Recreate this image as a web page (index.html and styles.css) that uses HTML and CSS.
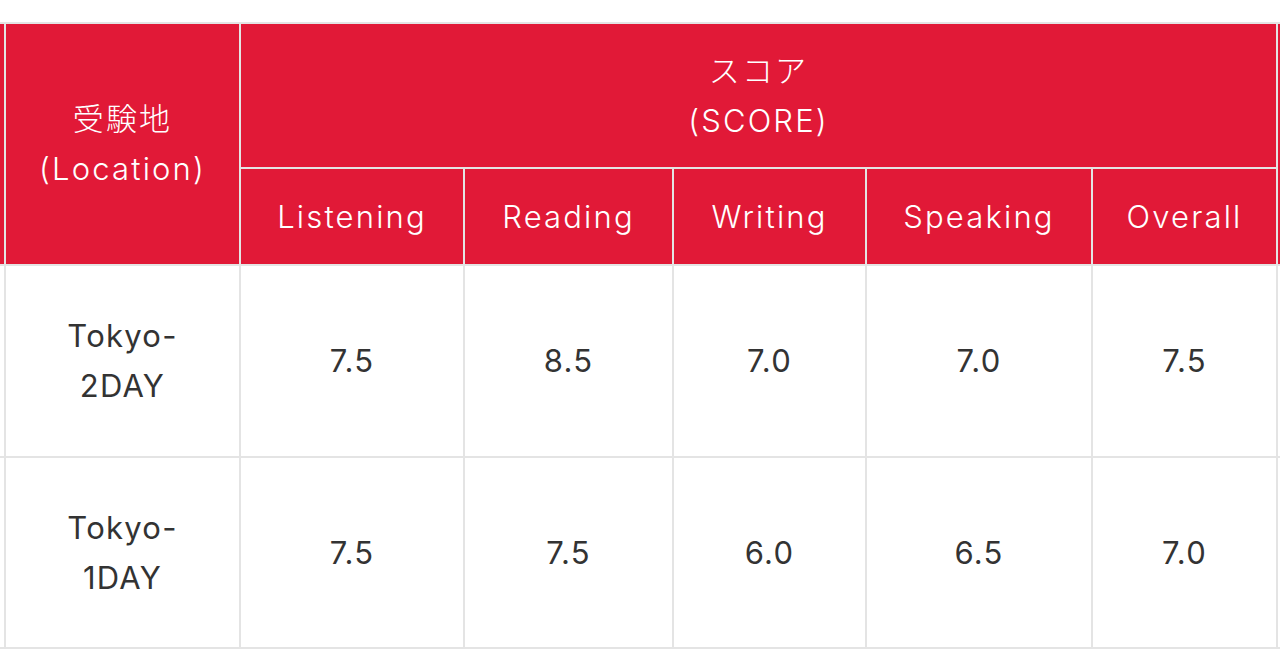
FILE: index.html
```html
<!DOCTYPE html>
<html lang="ja">
<head>
<meta charset="utf-8">
<title>IELTS Score</title>
<link rel="stylesheet" href="styles.css">
</head>
<body>
<div class="frame">
  <div class="score-grid">
    <div class="cell head edge span2"></div>
    <div class="cell head loc span2"><span>受験地<br>(Location)</span></div>
    <div class="cell head score"><span>スコア<br>(SCORE)</span></div>
    <div class="cell head edge-r span2"></div>
    <div class="cell head">Listening</div>
    <div class="cell head">Reading</div>
    <div class="cell head">Writing</div>
    <div class="cell head">Speaking</div>
    <div class="cell head">Overall</div>

    <div class="cell body edge"></div>
    <div class="cell body"><span>Tokyo-<br>2DAY</span></div>
    <div class="cell body">7.5</div>
    <div class="cell body">8.5</div>
    <div class="cell body">7.0</div>
    <div class="cell body">7.0</div>
    <div class="cell body">7.5</div>
    <div class="cell body edge-r"></div>

    <div class="cell body edge"></div>
    <div class="cell body"><span>Tokyo-<br>1DAY</span></div>
    <div class="cell body">7.5</div>
    <div class="cell body">7.5</div>
    <div class="cell body">6.0</div>
    <div class="cell body">6.5</div>
    <div class="cell body">7.0</div>
    <div class="cell body edge-r"></div>
  </div>
</div>
</body>
</html>
```

FILE: styles.css
```css
html, body {
  margin: 0;
  padding: 0;
  background: #ffffff;
}

.frame {
  width: 1280px;
  height: 670px;
  overflow: hidden;
  padding-top: 22px;
  box-sizing: border-box;
}

.score-grid {
  display: grid;
  grid-template-columns: 6px 235px 224px 209px 193px 226px 185px 10px;
  grid-template-rows: 145px 97px 192px 191px;
  width: 1288px;
  border-top: 2px solid #e4e4e4;
  font-family: "Inter", "Noto Sans CJK JP", sans-serif;
  font-size: 31px;
  line-height: 50px;
}

.cell {
  box-sizing: border-box;
  border-right: 2px solid #e4e4e4;
  border-bottom: 2px solid #e4e4e4;
  display: flex;
  align-items: center;
  justify-content: center;
  text-align: center;
}

.head {
  background: #e11937;
  color: #ffffff;
  font-weight: 300;
  letter-spacing: 0.07em;
}

.body {
  background: #ffffff;
  color: #333333;
  font-weight: 400;
  letter-spacing: 0.04em;
}

.span2 {
  grid-row: span 2;
}

.score {
  grid-column: span 5;
}

.edge-r {
  border-right: none;
}
```
